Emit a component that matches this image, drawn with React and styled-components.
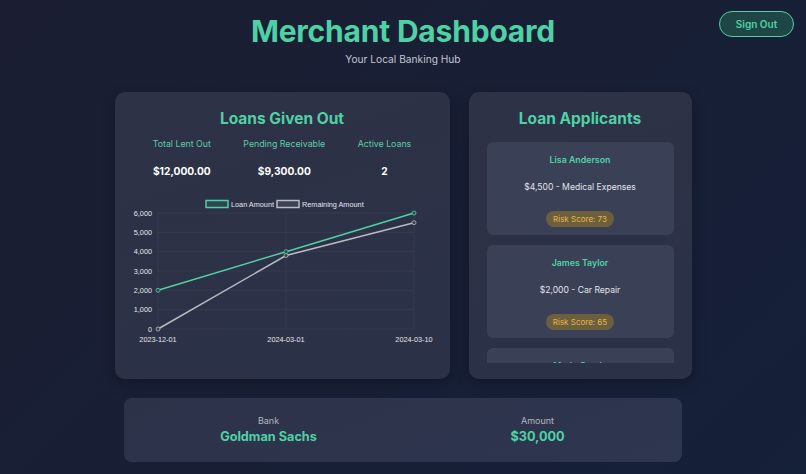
import React from "react";
import styled, { createGlobalStyle } from "styled-components";

const GlobalStyle = createGlobalStyle`
  html, body { margin: 0; padding: 0; }
  body {
    background: linear-gradient(135deg, #1b1e32 0%, #181f35 50%, #152039 100%);
    min-height: 474px;
    font-family: Inter, "Noto Sans", sans-serif;
    color: #e5e7eb;
    overflow: hidden;
  }
`;

const Page = styled.div`
  width: 806px;
  height: 474px;
  box-sizing: border-box;
  padding: 11px 12px 0 12px;
`;

const Header = styled.header`
  display: grid;
  grid-template-columns: 1fr auto 1fr;
  align-items: start;
`;

const TitleBlock = styled.div`
  grid-column: 2;
  text-align: center;
  padding-top: 1px;
`;

const Title = styled.h1`
  margin: 0;
  font-size: 30px;
  line-height: 38px;
  font-weight: 700;
  color: #4fd1a5;
  letter-spacing: -0.2px;
`;

const Subtitle = styled.p`
  margin: 2px 0 0;
  font-size: 10.2px;
  line-height: 14px;
  color: #c3c6cf;
`;

const SignOut = styled.button`
  grid-column: 3;
  justify-self: end;
  width: 75px;
  height: 26px;
  border-radius: 13px;
  border: 1.5px solid #4fd1a5;
  background: #1f4647;
  color: #4fd1a5;
  font-family: Inter, sans-serif;
  font-weight: 600;
  font-size: 10px;
  cursor: pointer;
`;

const Main = styled.main`
  width: 577px;
  margin: 26px auto 0;
  display: grid;
  grid-template-columns: 335px 223px;
  gap: 19px;
`;

const Card = styled.section`
  background: linear-gradient(160deg, #2d3246 0%, #2b3147 100%);
  border-radius: 10px;
  padding: ${(p) => p.$pad || "18px"};
  box-sizing: border-box;
  box-shadow: 0 4px 14px rgba(0, 0, 0, 0.25);
`;

const CardTitle = styled.h2`
  margin: 0;
  text-align: center;
  font-size: 15.5px;
  line-height: 20px;
  font-weight: 700;
  color: #4fd1a5;
`;

const Stats = styled.div`
  display: flex;
  justify-content: space-around;
  padding: 0 2px;
  margin-top: 9px;
`;

const Stat = styled.div`
  display: flex;
  flex-direction: column;
  align-items: center;
  gap: 14px;
`;

const StatLabel = styled.span`
  font-size: 8.8px;
  line-height: 12px;
  color: #5ccda6;
`;

const StatValue = styled.span`
  font-size: 10.2px;
  line-height: 14px;
  font-weight: 700;
  color: #ffffff;
`;

const ChartWrap = styled.div`
  margin-top: 18px;
  svg { display: block; overflow: visible; }
`;

const List = styled.div`
  margin-top: 13px;
  height: 221px;
  overflow: hidden;
  display: flex;
  flex-direction: column;
  gap: 10px;
`;

const Applicant = styled.div`
  flex: none;
  background: #3a4157;
  border-radius: 6px;
  padding: 12px 10px 8px;
  display: flex;
  flex-direction: column;
  align-items: center;
`;

const ApplicantName = styled.span`
  font-size: 8.8px;
  line-height: 12px;
  font-weight: 600;
  color: #4fd1a5;
`;

const ApplicantDesc = styled.span`
  margin-top: 15px;
  font-size: 8.6px;
  line-height: 12px;
  color: #e2e4ea;
`;

const Badge = styled.span`
  margin-top: 18px;
  height: 16px;
  line-height: 16px;
  padding: 0 7px;
  border-radius: 8px;
  background: #6b5f3d;
  color: #eab54a;
  font-size: 8px;
`;

const Summary = styled.section`
  width: 558px;
  height: 64px;
  margin: 19px auto 0;
  box-sizing: border-box;
  border-radius: 8px;
  background: linear-gradient(160deg, #2c3248 0%, #2e3650 100%);
  display: grid;
  grid-template-columns: 1fr 1fr;
  align-items: center;
  padding: 0 10px;
`;

const SummaryItem = styled.div`
  display: flex;
  flex-direction: column;
  align-items: center;
  gap: 2px;
`;

const SummaryLabel = styled.span`
  font-size: 9px;
  line-height: 12px;
  color: #b4b7c0;
`;

const SummaryValue = styled.span`
  font-size: 12.7px;
  line-height: 16px;
  font-weight: 700;
  color: #4fd1a5;
`;

const LineChart = () => {
  const W = 295;
  const H = 150;
  const x0 = 23, x1 = 279;
  const top = 17, bottom = 133;
  const y = (v) => bottom - (v / 6000) * (bottom - top);
  const xs = [x0, (x0 + x1) / 2, x1];
  const loan = [2000, 4000, 6000];
  const rem = [0, 3800, 5500];
  const ticks = [0, 1000, 2000, 3000, 4000, 5000, 6000];
  const labels = ["2023-12-01", "2024-03-01", "2024-03-10"];
  const teal = "#4fd1a5";
  const gray = "#b9bac2";
  const font = "'Liberation Sans', Arial, sans-serif";
  const pts = (arr) => arr.map((v, i) => `${xs[i]},${y(v)}`).join(" ");
  return (
    <svg width={W} height={H} viewBox={`0 0 ${W} ${H}`}>
      <rect x="71" y="4.5" width="22" height="7" fill="rgba(79,209,165,0.12)" stroke={teal} strokeWidth="1.5" />
      <text x="96" y="10.8" fontSize="7.3" fill="#e5e7eb" fontFamily={font}>Loan Amount</text>
      <rect x="142" y="4.5" width="22" height="7" fill="rgba(185,186,194,0.12)" stroke={gray} strokeWidth="1.5" />
      <text x="167" y="10.8" fontSize="7.3" fill="#e5e7eb" fontFamily={font}>Remaining Amount</text>
      {ticks.map((t) => (
        <line key={t} x1={x0} x2={x1} y1={y(t)} y2={y(t)} stroke="rgba(255,255,255,0.05)" strokeWidth="1" />
      ))}
      {xs.map((x, i) => (
        <line key={i} x1={x} x2={x} y1={top} y2={bottom} stroke="rgba(255,255,255,0.05)" strokeWidth="1" />
      ))}
      {ticks.map((t) => (
        <text key={t} x="17" y={y(t) + 2.6} fontSize="7.3" textAnchor="end" fill="#e5e7eb" fontFamily={font}>
          {t.toLocaleString("en-US")}
        </text>
      ))}
      {labels.map((l, i) => (
        <text key={l} x={xs[i]} y="145.5" fontSize="7.3" textAnchor="middle" fill="#e5e7eb" fontFamily={font}>
          {l}
        </text>
      ))}
      <polyline points={pts(rem)} fill="none" stroke={gray} strokeWidth="1.5" />
      <polyline points={pts(loan)} fill="none" stroke={teal} strokeWidth="1.5" />
      {rem.map((v, i) => (
        <circle key={"r" + i} cx={xs[i]} cy={y(v)} r="2" fill="#3a3f52" stroke={gray} strokeWidth="0.8" />
      ))}
      {loan.map((v, i) => (
        <circle key={"l" + i} cx={xs[i]} cy={y(v)} r="2" fill="#2f4a48" stroke={teal} strokeWidth="0.8" />
      ))}
    </svg>
  );
};

const applicants = [
  { name: "Lisa Anderson", desc: "$4,500 - Medical Expenses", score: 73 },
  { name: "James Taylor", desc: "$2,000 - Car Repair", score: 65 },
  { name: "Maria Garcia", desc: "$3,200 - Home Repair", score: 70 },
];

export default function App() {
  return (
    <>
      <GlobalStyle />
      <Page>
        <Header>
          <TitleBlock>
            <Title>Merchant Dashboard</Title>
            <Subtitle>Your Local Banking Hub</Subtitle>
          </TitleBlock>
          <SignOut>Sign Out</SignOut>
        </Header>
        <Main>
          <Card $pad="17px 20px 16px">
            <CardTitle>Loans Given Out</CardTitle>
            <Stats>
              <Stat>
                <StatLabel>Total Lent Out</StatLabel>
                <StatValue>$12,000.00</StatValue>
              </Stat>
              <Stat>
                <StatLabel>Pending Receivable</StatLabel>
                <StatValue>$9,300.00</StatValue>
              </Stat>
              <Stat>
                <StatLabel>Active Loans</StatLabel>
                <StatValue>2</StatValue>
              </Stat>
            </Stats>
            <ChartWrap>
              <LineChart />
            </ChartWrap>
          </Card>
          <Card $pad="17px 18px 16px">
            <CardTitle>Loan Applicants</CardTitle>
            <List>
              {applicants.map((a) => (
                <Applicant key={a.name}>
                  <ApplicantName>{a.name}</ApplicantName>
                  <ApplicantDesc>{a.desc}</ApplicantDesc>
                  <Badge>Risk Score: {a.score}</Badge>
                </Applicant>
              ))}
            </List>
          </Card>
        </Main>
        <Summary>
          <SummaryItem>
            <SummaryLabel>Bank</SummaryLabel>
            <SummaryValue>Goldman Sachs</SummaryValue>
          </SummaryItem>
          <SummaryItem>
            <SummaryLabel>Amount</SummaryLabel>
            <SummaryValue>$30,000</SummaryValue>
          </SummaryItem>
        </Summary>
      </Page>
    </>
  );
}
